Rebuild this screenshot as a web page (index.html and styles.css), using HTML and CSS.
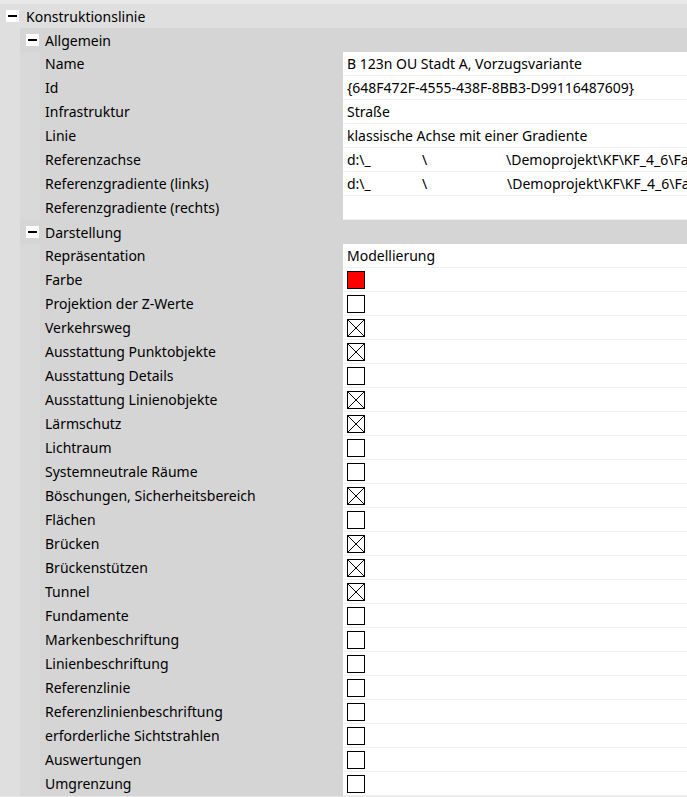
FILE: index.html
```html
<!DOCTYPE html>
<html lang="de">
<head>
    <meta charset="UTF-8">
    <link rel="stylesheet" href="styles.css">
    <title>Konstruktionslinie</title>
</head>
<body>
    <div class="tree">
        <div class="root-head"><span class="toggle"></span>Konstruktionslinie</div>

        <div class="section">
            <div class="section-head"><span class="toggle"></span>Allgemein</div>
            <div class="prop"><span class="indent"></span><span class="label">Name</span><span class="value">B 123n OU Stadt A, Vorzugsvariante</span></div>
            <div class="prop"><span class="indent"></span><span class="label">Id</span><span class="value">{648F472F-4555-438F-8BB3-D99116487609}</span></div>
            <div class="prop"><span class="indent"></span><span class="label">Infrastruktur</span><span class="value">Straße</span></div>
            <div class="prop"><span class="indent"></span><span class="label">Linie</span><span class="value">klassische Achse mit einer Gradiente</span></div>
            <div class="prop"><span class="indent"></span><span class="label">Referenzachse</span><span class="value"><span class="seg-a">d:\_</span><span class="seg-b">\</span><span class="seg-c">\Demoprojekt\KF\KF_4_6\Fa</span></span></div>
            <div class="prop"><span class="indent"></span><span class="label">Referenzgradiente (links)</span><span class="value"><span class="seg-a">d:\_</span><span class="seg-b">\</span><span class="seg-c seg-d">\Demoprojekt\KF\KF_4_6\Fa</span></span></div>
            <div class="prop"><span class="indent"></span><span class="label">Referenzgradiente (rechts)</span><span class="value"></span></div>
        </div>

        <div class="section">
            <div class="section-head"><span class="toggle"></span>Darstellung</div>
            <div class="prop"><span class="indent"></span><span class="label">Repräsentation</span><span class="value">Modellierung</span></div>
            <div class="prop"><span class="indent"></span><span class="label">Farbe</span><span class="value"><span class="box red"></span></span></div>
            <div class="prop"><span class="indent"></span><span class="label">Projektion der Z-Werte</span><span class="value"><span class="box"></span></span></div>
            <div class="prop"><span class="indent"></span><span class="label">Verkehrsweg</span><span class="value"><span class="box"><svg class="cross" viewBox="0 0 16 16"><path d="M0 0L16 16M16 0L0 16"/></svg></span></span></div>
            <div class="prop"><span class="indent"></span><span class="label">Ausstattung Punktobjekte</span><span class="value"><span class="box"><svg class="cross" viewBox="0 0 16 16"><path d="M0 0L16 16M16 0L0 16"/></svg></span></span></div>
            <div class="prop"><span class="indent"></span><span class="label">Ausstattung Details</span><span class="value"><span class="box"></span></span></div>
            <div class="prop"><span class="indent"></span><span class="label">Ausstattung Linienobjekte</span><span class="value"><span class="box"><svg class="cross" viewBox="0 0 16 16"><path d="M0 0L16 16M16 0L0 16"/></svg></span></span></div>
            <div class="prop"><span class="indent"></span><span class="label">Lärmschutz</span><span class="value"><span class="box"><svg class="cross" viewBox="0 0 16 16"><path d="M0 0L16 16M16 0L0 16"/></svg></span></span></div>
            <div class="prop"><span class="indent"></span><span class="label">Lichtraum</span><span class="value"><span class="box"></span></span></div>
            <div class="prop"><span class="indent"></span><span class="label">Systemneutrale Räume</span><span class="value"><span class="box"></span></span></div>
            <div class="prop"><span class="indent"></span><span class="label">Böschungen, Sicherheitsbereich</span><span class="value"><span class="box"><svg class="cross" viewBox="0 0 16 16"><path d="M0 0L16 16M16 0L0 16"/></svg></span></span></div>
            <div class="prop"><span class="indent"></span><span class="label">Flächen</span><span class="value"><span class="box"></span></span></div>
            <div class="prop"><span class="indent"></span><span class="label">Brücken</span><span class="value"><span class="box"><svg class="cross" viewBox="0 0 16 16"><path d="M0 0L16 16M16 0L0 16"/></svg></span></span></div>
            <div class="prop"><span class="indent"></span><span class="label">Brückenstützen</span><span class="value"><span class="box"><svg class="cross" viewBox="0 0 16 16"><path d="M0 0L16 16M16 0L0 16"/></svg></span></span></div>
            <div class="prop"><span class="indent"></span><span class="label">Tunnel</span><span class="value"><span class="box"><svg class="cross" viewBox="0 0 16 16"><path d="M0 0L16 16M16 0L0 16"/></svg></span></span></div>
            <div class="prop"><span class="indent"></span><span class="label">Fundamente</span><span class="value"><span class="box"></span></span></div>
            <div class="prop"><span class="indent"></span><span class="label">Markenbeschriftung</span><span class="value"><span class="box"></span></span></div>
            <div class="prop"><span class="indent"></span><span class="label">Linienbeschriftung</span><span class="value"><span class="box"></span></span></div>
            <div class="prop"><span class="indent"></span><span class="label">Referenzlinie</span><span class="value"><span class="box"></span></span></div>
            <div class="prop"><span class="indent"></span><span class="label">Referenzlinienbeschriftung</span><span class="value"><span class="box"></span></span></div>
            <div class="prop"><span class="indent"></span><span class="label">erforderliche Sichtstrahlen</span><span class="value"><span class="box"></span></span></div>
            <div class="prop"><span class="indent"></span><span class="label">Auswertungen</span><span class="value"><span class="box"></span></span></div>
            <div class="prop"><span class="indent"></span><span class="label">Umgrenzung</span><span class="value"><span class="box"></span></span></div>
        </div>
    </div>
</body>
</html>
```
FILE: styles.css
```css
body {
    margin: 0;
    padding: 0;
    background-color: #e8e8e8;
    font-family: "Noto Sans", "DejaVu Sans", sans-serif;
    font-size: 14px;
    color: #000;
    overflow: hidden;
}

.tree {
    margin-top: 4px;
    background-color: #dfdfdf;
}

/* Expand / collapse toggle */
.toggle {
    display: inline-block;
    position: relative;
    width: 13px;
    height: 12px;
    background-color: #fff;
    margin-right: 7px;
    flex-shrink: 0;
}

.toggle::after {
    content: "";
    position: absolute;
    left: 2px;
    top: 5px;
    width: 9px;
    height: 2px;
    background-color: #000;
}

.root-head,
.section-head {
    display: flex;
    align-items: center;
    height: 24px;
    padding-left: 6px;
    white-space: nowrap;
}

.section {
    margin-left: 20px;
    background-color: #d9d9d9;
}

.section-head {
    background-color: #d5d5d5;
}

.section-head .toggle {
    margin-right: 6px;
}

/* Property rows */
.prop {
    display: grid;
    grid-template-columns: 20px 303px 1fr;
    height: 24px;
}

.label {
    background-color: #d5d5d5;
    padding-left: 5px;
    line-height: 24px;
    white-space: nowrap;
    overflow: hidden;
}

.value {
    display: flex;
    align-items: center;
    background-color: #fff;
    border-bottom: 1px solid #efefef;
    padding-left: 4px;
    white-space: nowrap;
    overflow: hidden;
}

/* redacted path segments */
.seg-a,
.seg-b,
.seg-c {
    flex-shrink: 0;
}

.seg-a {
    width: 75px;
}

.seg-b {
    width: 84px;
}

.seg-d {
    margin-left: 1px;
}

/* Checkboxes */
.box {
    display: inline-block;
    box-sizing: border-box;
    width: 18px;
    height: 18px;
    border: 1px solid #000;
    background-color: #fff;
}

.box.red {
    background-color: #ff0000;
}

.cross {
    display: block;
    width: 16px;
    height: 16px;
    fill: none;
    stroke: #000;
    stroke-width: 1.2;
    shape-rendering: crispEdges;
}
```
